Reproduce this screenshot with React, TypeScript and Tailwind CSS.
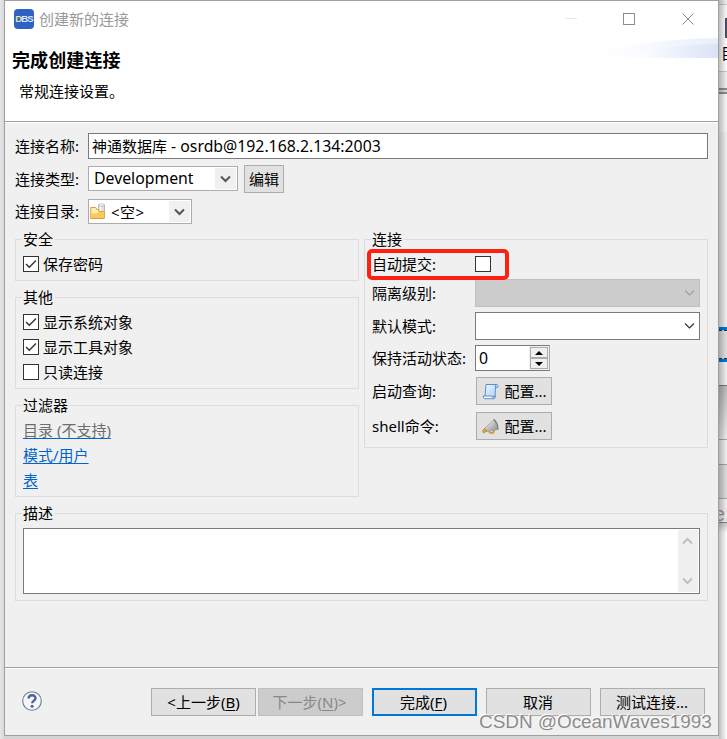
import React from "react";
import type { ReactNode } from "react";

function Chevron({ className, bold = false }: { className: string; bold?: boolean }) {
  return (
    <svg width="11" height="8" viewBox="0 0 11 8" fill="none" stroke="currentColor" strokeWidth={bold ? 2 : 1.2} className={className}>
      <path d="M1 1.5 L5.5 6 L10 1.5" />
    </svg>
  );
}

function Check({ checked = false }: { checked?: boolean }) {
  return (
    <span className="flex h-4 w-4 shrink-0 items-center justify-center border border-[#333] bg-white">
      {checked && (
        <svg width="12" height="10" viewBox="0 0 12 10" fill="none" stroke="#333" strokeWidth="1.4">
          <path d="M1 5 L4.3 8.3 L11 1.6" />
        </svg>
      )}
    </span>
  );
}

function CheckRow({ label, checked = false }: { label: string; checked?: boolean }) {
  return (
    <label className="flex h-[25px] items-center gap-1">
      <Check checked={checked} />
      <span>{label}</span>
    </label>
  );
}

function Group({ title, className, children }: { title: string; className: string; children: ReactNode }) {
  return (
    <section className={`border border-[#dcdcdc] px-[7px] ${className}`}>
      <h2 className="-mt-[11px] h-5 leading-5">
        <span className="-ml-px bg-[#f0f0f0] pr-0.5 pl-px">{title}</span>
      </h2>
      {children}
    </section>
  );
}

function Button({ className, children }: { className: string; children: ReactNode }) {
  return (
    <button className={`flex h-7 shrink-0 items-center justify-center whitespace-nowrap ${className}`}>{children}</button>
  );
}

function Field({ label, className, children }: { label: string; className: string; children: ReactNode }) {
  return (
    <div className={`flex items-center ${className}`}>
      <span className="w-[103px] shrink-0 whitespace-nowrap">{label}</span>
      {children}
    </div>
  );
}

function FolderIcon() {
  return (
    <svg width="16" height="17" viewBox="0 0 16 17" className="ml-px shrink-0">
      <path d="M8.500 2h6v11h-6z" fill="#dedede" stroke="#a9a9a9" strokeWidth=".8" />
      <path d="M10.500 3.500v5" stroke="#fff" strokeWidth="1.500" />
      <ellipse cx="11.500" cy="2" rx="3" ry="1.300" fill="#f2f2f2" stroke="#aaa" strokeWidth=".6" />
      <path d="M.8 15.500V4.500h5l1 2h2V8.500h5.500v7z" fill="#ffedb8" stroke="#d9a036" />
      <path d="M1.300 10.500h5.500l1.500-1.700h5.500V15H1.300z" fill="#f8c957" />
    </svg>
  );
}

function ScrollIcon() {
  return (
    <svg width="17" height="17" viewBox="0 0 17 17" className="shrink-0">
      <defs>
        <linearGradient id="paper" x1="0" x2="1" y1="0" y2="1">
          <stop offset="0" stopColor="#f2f9ff" />
          <stop offset="1" stopColor="#a9cdf5" />
        </linearGradient>
      </defs>
      <path d="M4 1.500h11c-1 .3-1.500 1-1.500 2.500L13 13.500H3z" fill="url(#paper)" stroke="#5f8fc9" />
      <path d="M13.500 4.500h2.300V2.500c0-1-1.500-1.200-2.300 0z" fill="#b9d6f5" stroke="#5f8fc9" strokeWidth=".8" />
      <path d="M1.300 13h9.200c0 1.500.5 2.500 1.700 2.700H3c-1 0-1.700-1-1.700-2.700z" fill="#eef6ff" stroke="#5f8fc9" />
      <path d="M12 15.500c1.200 0 1.500-1 1.500-3" fill="none" stroke="#5f8fc9" />
    </svg>
  );
}

function HornIcon() {
  return (
    <svg width="17" height="17" viewBox="0 0 17 17" className="shrink-0">
      <defs>
        <linearGradient id="horn" x1="0" x2="1" y1="0" y2="1">
          <stop offset="0" stopColor="#fafafa" />
          <stop offset="1" stopColor="#8a8a8a" />
        </linearGradient>
      </defs>
      <path d="M7 12.500c0 3.500 5 3.500 5-.5" fill="none" stroke="#d09a30" strokeWidth="1.800" />
      <path d="M2.500 10.500 L12 1.500 L16 11.500 L4.500 13.500z" fill="url(#horn)" stroke="#999" strokeWidth=".7" />
      <path d="M12 1.500 C14 3.500 16 8 16 11.500" fill="none" stroke="#777" strokeWidth="1.200" />
      <path d="M.5 12.500 L3 10.500 L5 13 L1.500 15z" fill="#e3a83b" stroke="#9c7430" strokeWidth=".6" />
    </svg>
  );
}

function TitleBar() {
  return (
    <div className="flex h-9 items-center pl-[9px] text-[#999]">
      <span className="flex h-5 w-5 items-center justify-center rounded-[4px] bg-[#2f62c4] font-['Liberation_Sans'] text-[9.5px] font-bold tracking-[-0.8px] text-[#d8e6ff]">
        <span className="text-[#e8e29a]">D</span>BS
      </span>
      <span className="ml-[5px]">创建新的连接</span>
      <svg width="130" height="14" viewBox="0 0 130 14" fill="none" className="mr-[23px] ml-auto" shapeRendering="crispEdges">
        <path d="M0 6.500h12" stroke="#e8e8e8" />
        <rect x="58.500" y="1.500" width="11" height="11" stroke="#8c8c8c" />
        <path d="M117.500 1.500l11 11M128.500 1.500l-11 11" stroke="#8c8c8c" shapeRendering="auto" />
      </svg>
    </div>
  );
}

function Header() {
  return (
    <header className="relative h-[120px] shrink-0 bg-white">
      <TitleBar />
      <svg width="140" height="20" viewBox="0 0 140 20" className="absolute top-[37px] right-0">
        <defs>
          <linearGradient id="wave" x1="0" x2="1" y1="0" y2="0">
            <stop offset="0" stopColor="#fff" />
            <stop offset=".35" stopColor="#f9fbff" />
            <stop offset="1" stopColor="#dae3f7" />
          </linearGradient>
        </defs>
        <path d="M0 20 Q60 1 140 0 V20z" fill="url(#wave)" opacity=".6" />
        <path d="M30 20 Q80 7 140 6 V20z" fill="url(#wave)" />
      </svg>
      <h1 className="mt-[11px] ml-[7px] text-[18px] leading-6 font-bold tracking-[0.1px]">完成创建连接</h1>
      <p className="mt-[9px] ml-[14px] leading-5">常规连接设置。</p>
    </header>
  );
}

function DropBox({ className }: { className: string }) {
  return (
    <span className={`ml-auto flex items-center justify-center bg-[#f0f0f0] text-[#555] ${className}`}>
      <Chevron bold className="block" />
    </span>
  );
}

function MainForm() {
  return (
    <div>
      <div className="flex h-[26px] items-center">
        <span className="w-[73px] shrink-0">连接名称:</span>
        <div className="flex h-[26px] w-[620px] items-center border border-[#7a7a7a] bg-white pl-[3px]">
          <span>
            神通数据库<span className="text-[15.8px]"> - osrdb@192.168.2.134:2003</span>
          </span>
        </div>
      </div>
      <div className="mt-1.5 flex h-7 items-center">
        <span className="w-[73px] shrink-0">连接类型:</span>
        <div className="-mt-px flex h-[25px] w-[150px] items-center border border-[#acacac] bg-white pr-px pb-px pl-[5px]">
          <span className="text-[15.8px]">Development</span>
          <DropBox className="mt-px h-[21px] w-[21px]" />
        </div>
        <Button className="ml-1.5 w-10 border border-[#adadad] bg-[#e1e1e1]">编辑</Button>
      </div>
      <div className="mt-1.5 flex h-[25px] items-center">
        <span className="-mt-px w-[73px] shrink-0">连接目录:</span>
        <div className="flex h-[25px] w-[104px] items-center border border-[#acacac] bg-white pr-px">
          <FolderIcon />
          <span className="ml-[5px] tracking-[0.4px]">&lt;空&gt;</span>
          <DropBox className="h-[21px] w-[21px]" />
        </div>
      </div>
    </div>
  );
}

function ConnectionGroup() {
  return (
    <Group title="连接" className="h-[209px] w-[344px]">
      <div className="relative">
        <Field label="自动提交:" className="h-[30px]">
          <Check />
        </Field>
        <div className="absolute top-0 -left-[5px] h-[31px] w-[142px] rounded-[5px] border-4 border-[#fd2113]" />
      </div>
      <Field label="隔离级别:" className="h-7">
        <div className="flex h-7 w-[225px] items-center justify-end border border-[#bfbfbf] bg-[#ccc] pr-1 text-[#a0a0a0]">
          <Chevron className="block" />
        </div>
      </Field>
      <Field label="默认模式:" className="mt-[5px] h-7">
        <div className="flex h-7 w-[225px] items-center justify-end border border-[#7a7a7a] bg-white pr-1 text-[#333]">
          <Chevron className="block" />
        </div>
      </Field>
      <Field label="保持活动状态:" className="mt-[5px] h-[26px]">
        <div className="flex h-[26px] w-[75px] items-center justify-between border border-[#7a7a7a] border-r-[#acacac] bg-white pl-[3px]">
          <span className="text-[15.8px]">0</span>
          <div className="flex h-full flex-col bg-[#f0f0f0] px-px py-px">
            <span className="flex h-[11px] w-[18px] items-center justify-center border border-[#acacac]">
              <svg width="8" height="4" viewBox="0 0 8 4"><path d="M4 0l4 4H0z" /></svg>
            </span>
            <span className="flex h-[11px] w-[18px] items-center justify-center border border-[#acacac]">
              <svg width="8" height="4" viewBox="0 0 8 4"><path d="M4 4l4-4H0z" /></svg>
            </span>
          </div>
        </div>
      </Field>
      <Field label="启动查询:" className="mt-1.5 h-7">
        <Button className="ml-px w-[76px] gap-[5px] border border-[#adadad] bg-[#e1e1e1] pl-px">
          <ScrollIcon />
          配置...
        </Button>
      </Field>
      <Field label="shell命令:" className="mt-[7px] h-7">
        <Button className="ml-px w-[76px] gap-[5px] border border-[#adadad] bg-[#e1e1e1] pl-px">
          <HornIcon />
          配置...
        </Button>
      </Field>
    </Group>
  );
}

function Footer() {
  return (
    <footer className="flex h-[67px] shrink-0 items-center border-t border-white pr-[13px] pb-px pl-[17px]">
      <svg width="20" height="20" viewBox="0 0 20 20" className="mr-auto -mt-0.5 block shrink-0">
        <circle cx="10" cy="10" r="9.300" fill="#f4f6fa" stroke="#6f7c96" strokeWidth="1.100" />
        <path d="M6.600 7.500C6.600 3.200 13.500 3.200 13.500 7.300C13.500 9.600 10.200 9.700 10.200 12.300" fill="none" stroke="#4f638e" strokeWidth="2.400" />
        <circle cx="10.100" cy="15.300" r="1.500" fill="#4f638e" />
      </svg>
      <Button className="mr-0.5 w-[105px] border border-[#adadad] bg-[#e1e1e1]">&lt;上一步(<u className="underline-offset-2">B</u>)</Button>
      <Button className="mr-[9px] w-[105px] border border-[#bfbfbf] bg-[#ccc] pr-0.5 text-[#888]">下一步(<u className="underline-offset-2">N</u>)&gt;</Button>
      <Button className="mr-[9px] w-[105px] border-2 border-[#0078d7] bg-[#e1e1e1] pr-0.5">完成(<u className="underline-offset-2">F</u>)</Button>
      <Button className="mr-[9px] w-[105px] border border-[#adadad] bg-[#e1e1e1] pr-px">取消</Button>
      <Button className="w-[105px] border border-[#adadad] bg-[#e1e1e1] pr-px">测试连接...</Button>
    </footer>
  );
}

function BackgroundEdge() {
  return (
    <div className="relative flex h-[739px] w-2 flex-col overflow-hidden bg-white">
      <div className="h-[5px] border-b border-[#ccc] bg-[#f0f0f0]" />
      <div className="h-[13px] bg-[#f8f8f8]" />
      <div className="ml-1.5 h-5 bg-[#4b4d63]" />
      <div className="h-[33px] overflow-hidden pt-[5px] pl-0.5 leading-5">目</div>
      <div className="h-[17px] border-t border-[#ccc] bg-[#f0f0f0]" />
      <div className="h-[6px] border-y-2 border-[#8c8c8c] bg-[#ddd]" />
      <div className="h-[38px] bg-[#f8f8f8]" />
      <div className="h-[195px] bg-[#f0f0f0]" />
      <div className="h-[3px] bg-[#0078d7]" />
      <div className="h-[29px] border-y border-dashed border-[#333] bg-[#e1e1e1]" />
      <div className="h-[3px] bg-[#0078d7]" />
      <div className="h-[23px] bg-[#f0f0f0]" />
      <div className="h-px bg-[#777]" />
      <div className="h-[53px] bg-linear-to-b from-[#bbb] to-[#eee]" />
      <div className="h-[26px] border-y border-[#a5a5a5] bg-[#f0f0f0]" />
      <div className="h-[34px] border-b border-[#aaa] bg-[#ddd]" />
      <div className="h-6 border-b border-[#888] bg-[#f0f0f0] font-['Liberation_Sans'] text-[20px] leading-[30px] text-[#999]">
        <span className="-ml-[5px]">e:</span>
      </div>
      <div className="h-2.5 bg-linear-to-b from-[#ccc] to-white" />
      <div className="absolute inset-0 bg-linear-to-r from-black/25 to-transparent" />
    </div>
  );
}

export default function App() {
  return (
    <div className="relative flex h-[739px] w-[727px] overflow-hidden bg-[#d4d4d4] font-['Noto_Sans','Noto_Sans_CJK_SC',sans-serif] text-[15px] leading-5 whitespace-nowrap text-black">
      <div className="h-[739px] w-1 shrink-0 bg-linear-to-r from-[#e6e6e6] to-[#d8d8d8]" />
      <main className="flex h-[736px] w-[715px] shrink-0 flex-col border border-[#a0a0a0] bg-[#f0f0f0]">
        <Header />
        <div className="h-[547px] shrink-0 border-y border-t-[#a0a0a0] border-b-[#a0a0a0] pl-2.5">
          <div className="-ml-2.5 h-px bg-white" />
          <div className="mt-2.5">
            <MainForm />
          </div>
          <div className="mt-[15px] flex gap-[5px]">
            <div className="flex w-[344px] flex-col gap-4">
              <Group title="安全" className="h-[42px]">
                <div className="mt-0.5">
                  <CheckRow label="保存密码" checked />
                </div>
              </Group>
              <Group title="其他" className="h-[92px]">
                <div className="mt-0.5">
                  <CheckRow label="显示系统对象" checked />
                  <CheckRow label="显示工具对象" checked />
                  <CheckRow label="只读连接" />
                </div>
              </Group>
              <Group title="过滤器" className="h-[92px]">
                <div className="mt-[3px] text-[#0066cc] underline underline-offset-2">
                  <p className="h-[25px] leading-[25px] text-[#6d6d6d]">目录 (不支持)</p>
                  <p className="h-[25px] leading-[25px]">模式/用户</p>
                  <p className="h-[25px] leading-[25px]">表</p>
                </div>
              </Group>
            </div>
            <ConnectionGroup />
          </div>
          <Group title="描述" className="mt-4 h-[88px] w-[693px]">
            <div className="mt-[5px] flex h-[66px] w-[677px] justify-end border border-[#7a7a7a] bg-white p-px">
              <div className="flex w-5 flex-col items-center justify-between bg-[#f0f0f0] py-[7px] pr-0.5 text-[#bfbfbf]">
                <Chevron bold className="block rotate-180" />
                <Chevron bold className="block" />
              </div>
            </div>
          </Group>
        </div>
        <Footer />
      </main>
      <BackgroundEdge />
      <div className="absolute top-[710px] left-[479px] font-['Liberation_Sans',sans-serif] text-[18.9px] leading-6 text-[#8c8c8c] [text-shadow:-1px_-1px_0_#fff]">
        CSDN @OceanWaves1993
      </div>
    </div>
  );
}
